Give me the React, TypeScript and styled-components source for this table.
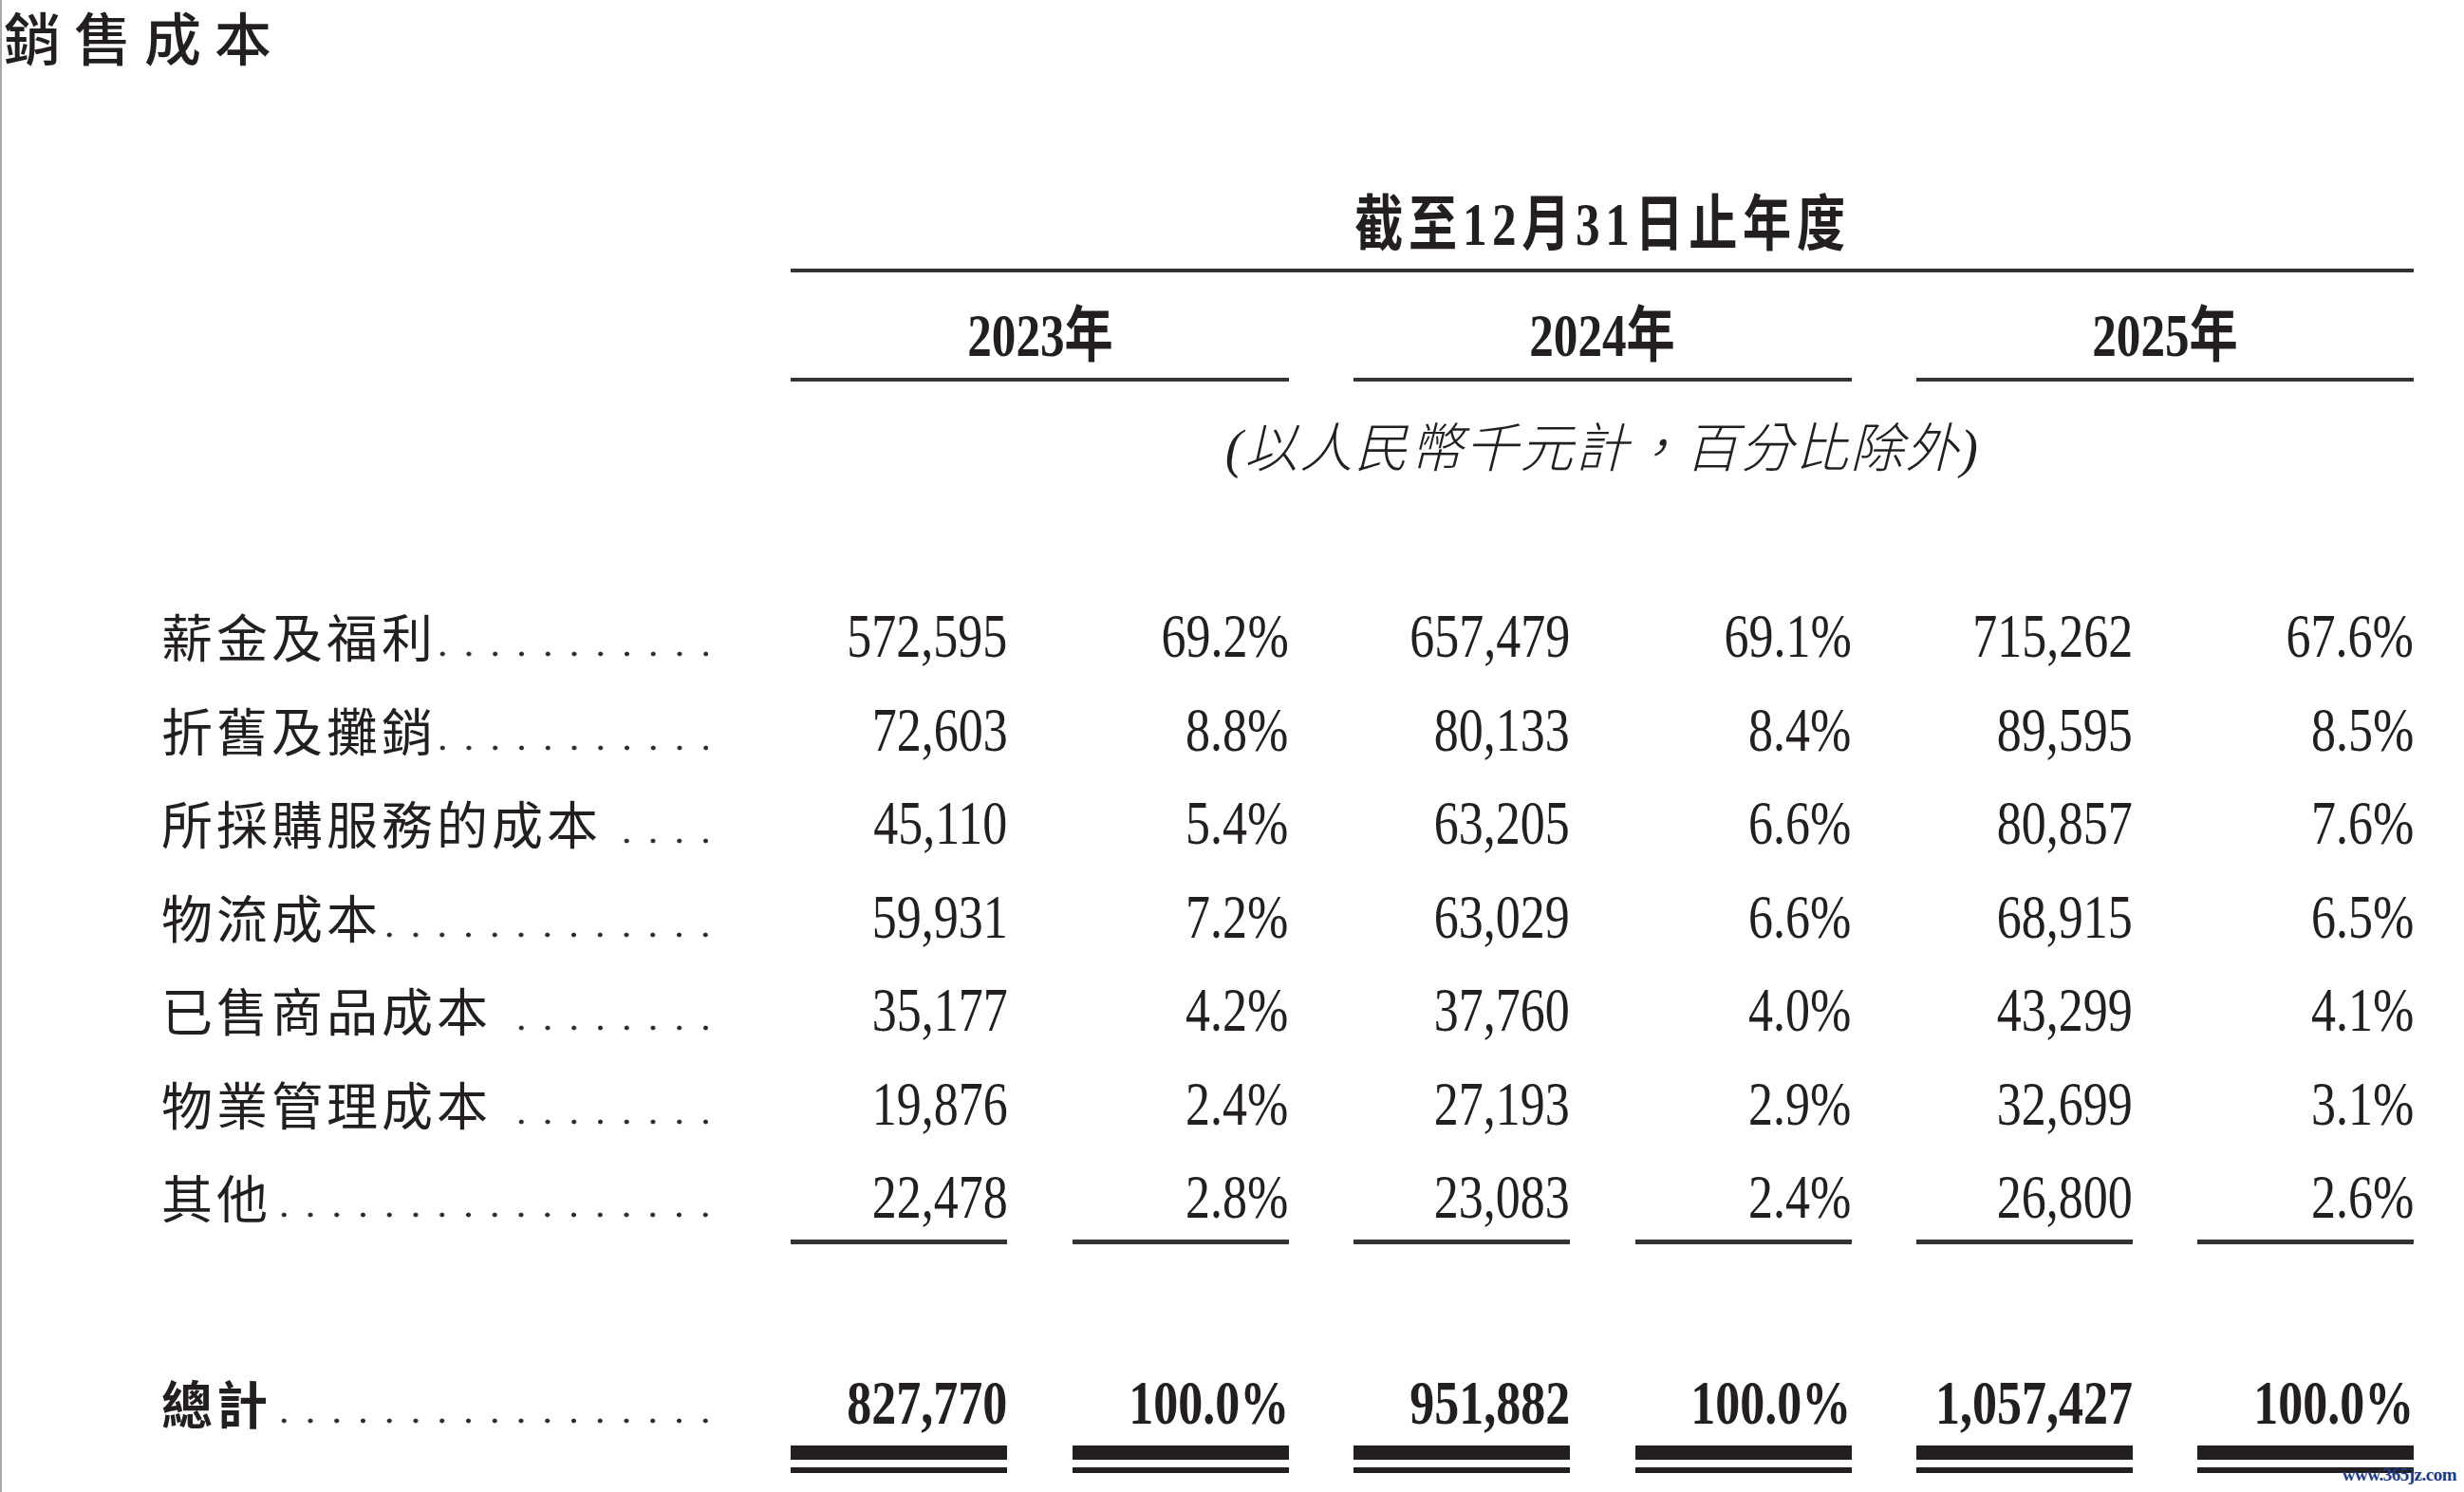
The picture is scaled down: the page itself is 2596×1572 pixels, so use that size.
import styled, { createGlobalStyle } from 'styled-components';

const GlobalStyle = createGlobalStyle`
  html, body {
    margin: 0;
    padding: 0;
    background: #fff;
  }

  body {
    font-family: 'Liberation Serif', 'Noto Sans CJK TC', serif;
    color: #231f20;
  }
`;

const Page = styled.div`
  position: relative;
  width: 2596px;
  height: 1572px;
  box-sizing: border-box;
  padding-left: 2px;
  border-left: 2px solid #a9a9a9;
  overflow: hidden;
  background: #fff;
`;

const Title = styled.h2`
  margin: 0;
  font-family: 'Noto Sans CJK TC', sans-serif;
  font-weight: 500;
  font-size: 60px;
  line-height: 76px;
  letter-spacing: 14px;
`;

const Table = styled.div`
  display: grid;
  grid-template-columns: 595px repeat(6, 228px);
  column-gap: 68.4px;
  margin: 129px 0 0 166px;
`;

const PeriodHead = styled.div`
  grid-column: 2 / -1;
  text-align: center;
  font-weight: 700;
  font-size: 64px;
  line-height: 64px;
  letter-spacing: 7px;
  padding-bottom: 14px;
  border-bottom: 4px solid #333;
`;

const YearHead = styled.div<{ $start: number }>`
  grid-column: ${(p) => p.$start} / span 2;
  text-align: center;
  font-weight: 700;
  font-size: 64px;
  line-height: 64px;
  padding: 35px 0 12px;
  border-bottom: 4px solid #333;
`;

const Squeezed = styled.span`
  display: inline-block;
  white-space: nowrap;
  transform: scaleX(0.8);
`;

const Unit = styled.div`
  grid-column: 2 / -1;
  text-align: center;
  font-style: italic;
  font-weight: 300;
  font-size: 56px;
  line-height: 64px;
  letter-spacing: 2px;
  padding: 39px 0 116px;
`;

const LabelCell = styled.div<{ $total?: boolean }>`
  display: flex;
  justify-content: space-between;
  align-items: ${(p) => (p.$total ? 'flex-start' : 'center')};
  height: ${(p) => (p.$total ? 'auto' : '98.5px')};
  padding: ${(p) => (p.$total ? '135px 19px 0 0' : '0 19px 0 0')};
`;

const LabelText = styled.span<{ $bold?: boolean }>`
  flex: 0 1 auto;
  min-width: 0;
  font-family: 'Noto Sans CJK TC', sans-serif;
  font-weight: ${(p) => (p.$bold ? 700 : 400)};
  font-size: 54px;
  line-height: 64px;
  letter-spacing: 4px;
  white-space: nowrap;
`;

const Leader = styled.span<{ $dots: number }>`
  flex: 0 0 auto;
  width: ${(p) => p.$dots * 27.75}px;
  height: 64px;
  background-image: radial-gradient(
    circle at 25.25px 51px,
    #2b2b2b 2px,
    transparent 2.8px
  );
  background-size: 27.75px 64px;
  background-repeat: repeat-x;
  background-position: left top;
`;

const NumCell = styled.div<{ $rule?: boolean }>`
  height: 98.5px;
  display: flex;
  align-items: center;
  justify-content: flex-end;
  box-shadow: ${(p) => (p.$rule ? 'inset 0 -5px 0 #333' : 'none')};
`;

const TotalCell = styled.div`
  padding-top: 135px;
  display: flex;
  flex-direction: column;
  align-items: flex-end;
`;

const Figure = styled.span<{ $bold?: boolean }>`
  display: inline-block;
  font-family: 'Liberation Serif', serif;
  font-weight: ${(p) => (p.$bold ? 700 : 400)};
  font-size: 65px;
  line-height: 64px;
  white-space: nowrap;
  transform: scaleX(0.8);
  transform-origin: right center;
`;

const DoubleRule = styled.div`
  align-self: stretch;
  margin-top: 13px;
  height: 8px;
  border-top: 15px solid #231f20;
  border-bottom: 6px solid #231f20;
`;

const Watermark = styled.div`
  position: absolute;
  right: 8px;
  bottom: 7px;
  font-family: 'Liberation Serif', serif;
  font-weight: 700;
  font-size: 19px;
  letter-spacing: -0.5px;
  color: #1c3a8a;
`;

const rows: { label: string; dots: number; values: string[] }[] = [
  { label: '薪金及福利', dots: 11, values: ['572,595', '69.2%', '657,479', '69.1%', '715,262', '67.6%'] },
  { label: '折舊及攤銷', dots: 11, values: ['72,603', '8.8%', '80,133', '8.4%', '89,595', '8.5%'] },
  { label: '所採購服務的成本', dots: 4, values: ['45,110', '5.4%', '63,205', '6.6%', '80,857', '7.6%'] },
  { label: '物流成本', dots: 13, values: ['59,931', '7.2%', '63,029', '6.6%', '68,915', '6.5%'] },
  { label: '已售商品成本', dots: 8, values: ['35,177', '4.2%', '37,760', '4.0%', '43,299', '4.1%'] },
  { label: '物業管理成本', dots: 8, values: ['19,876', '2.4%', '27,193', '2.9%', '32,699', '3.1%'] },
  { label: '其他', dots: 17, values: ['22,478', '2.8%', '23,083', '2.4%', '26,800', '2.6%'] },
];

const total = ['827,770', '100.0%', '951,882', '100.0%', '1,057,427', '100.0%'];

const years = ['2023', '2024', '2025'];

const App = () => {
  return (
    <Page>
      <GlobalStyle />
      <Title>銷售成本</Title>

      <Table>
        <PeriodHead>
          <Squeezed>截至12月31日止年度</Squeezed>
        </PeriodHead>

        {years.map((y, i) => (
          <YearHead key={y} $start={2 + i * 2}>
            <Squeezed>{y}年</Squeezed>
          </YearHead>
        ))}

        <Unit>(以人民幣千元計，百分比除外)</Unit>

        {rows.map((row, r) => (
          <>
            <LabelCell key={row.label}>
              <LabelText>{row.label}</LabelText>
              <Leader $dots={row.dots} />
            </LabelCell>
            {row.values.map((v, c) => (
              <NumCell key={`${r}-${c}`} $rule={r === rows.length - 1}>
                <Figure>{v}</Figure>
              </NumCell>
            ))}
          </>
        ))}

        <LabelCell $total>
          <LabelText $bold>總計</LabelText>
          <Leader $dots={17} />
        </LabelCell>
        {total.map((v, c) => (
          <TotalCell key={`t-${c}`}>
            <Figure $bold>{v}</Figure>
            <DoubleRule />
          </TotalCell>
        ))}
      </Table>

      <Watermark>www.365jz.com</Watermark>
    </Page>
  );
};

export default App;
